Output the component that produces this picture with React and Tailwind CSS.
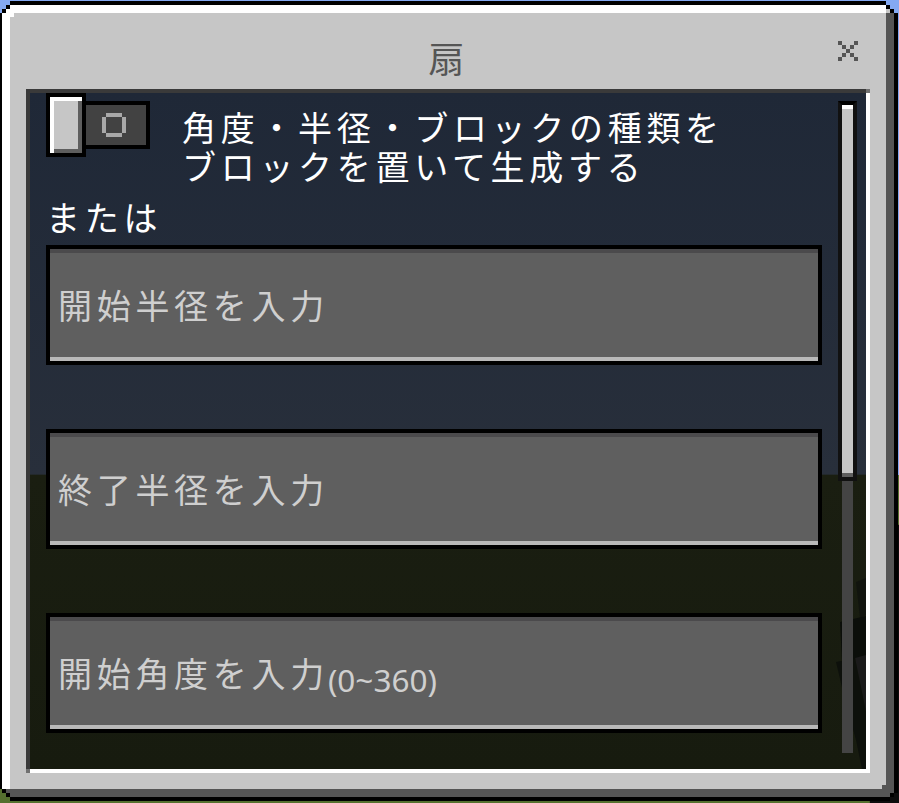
const cjk = { fontFamily: '"Noto Sans CJK JP", "Noto Sans", sans-serif' };

function Field({ children }) {
  return (
    <div className="border-4 border-black h-[120px]">
      <div className="h-full bg-[#5f5f5f] border-t-4 border-[#4b4a4c] border-b-4 border-b-[#b9b9b9] flex items-center pl-2 text-[34px] leading-none tracking-[4.7px] text-[#cfcfcf]">
        {children}
      </div>
    </div>
  );
}

function Toggle() {
  return (
    <div className="flex items-start">
      <div className="w-10 h-16 border-4 border-black bg-white pl-1 pt-1">
        <div className="w-7 h-[52px] bg-[#c6c6c6] border-r-4 border-b-4 border-[#5e5e5e]" />
      </div>
      <div className="mt-2 w-16 h-12 border-4 border-l-0 border-black bg-[#424242] flex items-center justify-center">
        <div className="relative w-6 h-6 border-4 border-[#a8a8a8] mr-1">
          <div className="absolute -left-1 -top-1 w-1 h-1 bg-[#424242]" />
          <div className="absolute -right-1 -top-1 w-1 h-1 bg-[#424242]" />
          <div className="absolute -left-1 -bottom-1 w-1 h-1 bg-[#424242]" />
          <div className="absolute -right-1 -bottom-1 w-1 h-1 bg-[#424242]" />
        </div>
      </div>
    </div>
  );
}

// stepped pixel corners of the panel, page coordinates
function Corners() {
  return (
    <svg className="absolute left-0 top-0 pointer-events-none" width="899" height="803" viewBox="0 0 899 803" shapeRendering="crispEdges">
      {/* top left */}
      <path fill="#84a9f2" d="M0 0h10v5H6v4H2v4H0z" />
      <path fill="#000000" d="M6 5h4v4H6zM2 9h4v4H2z" />
      <path fill="#ffffff" d="M6 9h4v4H6zM10 13h4v4h-4z" />
      {/* top right */}
      <path fill="#84a9f2" d="M886 0h13v13h-5V9h-4V5h-4z" />
      <path fill="#000000" d="M886 5h4v4h-4zM890 9h4v4h-4z" />
      <path fill="#c6c6c6" d="M886 9h4v4h-4z" />
      <path fill="#555555" d="M890 13h4v1h-4z" />
      {/* bottom left */}
      <path fill="#55702f" d="M0 789h2v4h4v4h4v6H0z" />
      <path fill="#000000" d="M2 789h4v4H2zM6 793h4v4H6z" />
      <path fill="#555555" d="M6 789h4v4H6z" />
      {/* bottom right */}
      <path fill="#555555" d="M882 785h4v4h-4z" />
      <path fill="#000000" d="M890 793h4v4h-4z" />
      <path fill="#0d0d0d" d="M894 793h5v10h-9v-6h4z" />
      {/* well corners */}
      <path fill="#717171" d="M866 89h4v4h-4zM26 769h4v4h-4z" />
    </svg>
  );
}

export default function App() {
  return (
    <div className="relative w-[899px] h-[803px] overflow-hidden bg-[linear-gradient(180deg,#84a9f2_0%,#84a9f2_59.1%,#55702f_59.2%,#55702f_65.3%,#0b0b0b_65.4%,#0b0b0b_100%)]" style={cjk}>
      <div className="absolute left-0 bottom-0 w-full h-[2px] bg-[linear-gradient(90deg,#55702f_0%,#55702f_96.7%,#0d0d0d_96.8%,#0d0d0d_100%)]" />
      <div className="relative mt-px w-[898px] h-[800px] bg-black pl-[2px] pt-1 pr-1 pb-1">
        <div className="h-full border-t-8 border-l-8 border-white border-r-8 border-r-[#555555] border-b-8 border-b-[#555555] bg-[#c6c6c6] flex flex-col px-4 pb-4">
          {/* title */}
          <div className="relative h-[76px] shrink-0 flex items-center justify-center pt-3 text-[36px] leading-none text-[#555555] pr-[3px]">
            扇
            <svg className="absolute right-3 top-[28px]" width="20" height="20" viewBox="0 0 20 20" fill="#555555">
              <path d="M0 0h4v4H0zM16 0h4v4h-4zM4 4h4v4H4zM12 4h4v4h-4zM8 8h4v4H8zM4 12h4v4H4zM12 12h4v4h-4zM0 16h4v4H0zM16 16h4v4h-4z" />
            </svg>
          </div>

          {/* scroll area */}
          <div className="relative flex-1 border-t-4 border-l-4 border-[#3a3a3a] border-r-4 border-r-white border-b-4 border-b-white overflow-hidden">
            <div className="relative h-full flex bg-[linear-gradient(180deg,#1f2837_0%,#282f3b_56.4%,#1a1e11_56.5%,#171b0f_100%)]">
              {/* dark blocks in the world behind the dialog */}
              <svg className="absolute left-0 top-0" width="836" height="676" viewBox="30 93 836 676">
                <polygon fill="#11140e" points="856,582 866,578 866,615 860,618" />
                <polygon fill="#0b0e0a" points="840,622 866,616 866,656 842,662" />
                <polygon fill="#1a1a1a" points="855,658 866,655 866,712" />
                <polygon fill="#0d100b" points="836,662 855,658 866,712 866,769 862,769 856,740 845,700" />
              </svg>

              <div className="relative w-[776px] ml-4 shrink-0">
                <div className="flex text-white">
                  <Toggle />
                  <div className="ml-[32px] mt-[14px] text-[34px] leading-[39px] tracking-[4.7px]">
                    <div>角度・半径・ブロックの種類を</div>
                    <div>ブロックを置いて生成する</div>
                  </div>
                </div>
                <div className="mt-[10px] h-[44px] flex items-center text-[34px] leading-none tracking-[4.7px] text-white">または</div>
                <div className="flex flex-col gap-16 mt-[6px]">
                  <Field>開始半径を入力</Field>
                  <Field>終了半径を入力</Field>
                  <Field>
                    開始角度を入力
                    <span className="text-[31.5px] tracking-normal -ml-[1px] mt-[13px]" style={{ fontFamily: '"Noto Sans", sans-serif' }}>(0~360)</span>
                  </Field>
                </div>
              </div>
              <div className="relative ml-4 mt-2 mb-4 w-[19px] shrink-0 flex flex-col">
                <div className="h-[380px] border-4 border-[#111111] bg-[#c6c6c6] border-t-black">
                  <div className="h-1 bg-white" />
                  <div className="h-[364px]" />
                  <div className="h-1 bg-[#5e5e5e]" />
                </div>
                <div className="flex-1 mx-1 bg-[#444444]" />
              </div>
            </div>
          </div>
        </div>
      </div>
      <Corners />
    </div>
  );
}
